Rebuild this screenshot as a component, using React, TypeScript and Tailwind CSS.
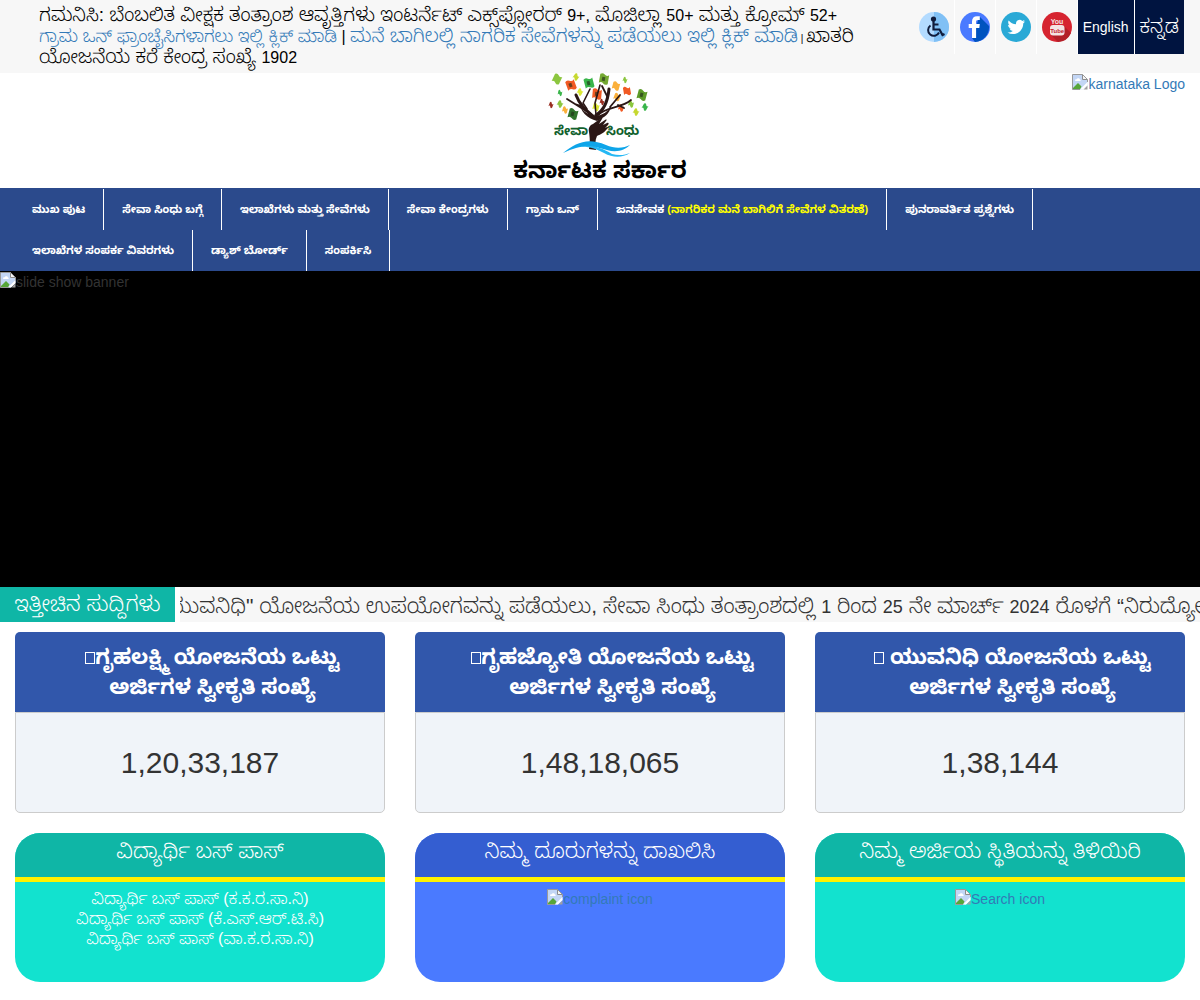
import React from "react";

function BrokenImage({ label }: { label: string }) {
  return (
    <span className="inline-flex items-start">
      <svg className="h-4 w-4 shrink-0" viewBox="0 0 16 16" aria-hidden="true">
        <path d="M.5.5h10l5 5v6L11 15.5H.5z" fill="#c3d6f5" />
        <path d="M1 15.500V14L6 9l3.500 3.500L8 15.500z" fill="#57a639" />
        <path d="M3 6.500c0-1 1-1.500 1.700-1.200.5-1.500 3-1.300 3.200.2C9 5.500 9.200 7 8 7H3.500z" fill="#fff" />
        <path d="M10.500.5v5h5" fill="#f4f4f4" stroke="#8d8d8d" />
        <path d="M11.500 15.500l4-4v4z" fill="#a0a0a0" />
        <path d="M8 15.500L15.500 8v3L11 15.500z" fill="#fff" />
        <path d="M15.500 8V5.500l-5-5H.5v15H8" fill="none" stroke="#9a9a9a" />
      </svg>
      <span>{label}</span>
    </span>
  );
}

function AccessIcon() {
  return (
    <svg className="h-[30px] w-[30px]" viewBox="0 0 30 30" aria-hidden="true">
      <circle cx="15" cy="15" r="15" fill="#b3dbff" />
      <path d="M15 0a15 15 0 010 30z" fill="#80c0f5" />
      <circle cx="14.500" cy="7" r="2.600" fill="#101c3c" />
      <path d="M14.500 9v8.500h6l3 5.500 2-1M14.500 12.500h5" fill="none" stroke="#101c3c" strokeWidth="2.200" />
      <path d="M11.500 13.500a5.700 5.700 0 108.500 7" fill="none" stroke="#101c3c" strokeWidth="2" />
    </svg>
  );
}

function FacebookIcon() {
  return (
    <svg className="h-[30px] w-[30px]" viewBox="0 0 30 30" aria-hidden="true">
      <circle cx="15" cy="15" r="15" fill="#4a7aff" />
      <path d="M19.500 4.500L29 14a15 15 0 01-14 16l-3-4z" fill="#0053bf" />
      <path d="M12 26V16H8.700v-4H12V9.500C12 6 14 4.300 17 4.300h2.800V8H18c-1.500 0-1.900.7-1.900 2v2h3.700l-.5 4h-3.200v10z" fill="#fff" />
    </svg>
  );
}

function TwitterIcon() {
  return (
    <svg className="h-[30px] w-[30px]" viewBox="0 0 30 30" aria-hidden="true">
      <circle cx="15" cy="15" r="15" fill="#2aa9d6" />
      <path
        transform="translate(6.500 6.200) scale(.73)"
        d="M23.950 4.570a10 10 0 01-2.820.77 4.950 4.950 0 002.160-2.720c-.95.550-2 .950-3.130 1.180a4.920 4.920 0 00-8.380 4.480C7.690 8.090 4.070 6.130 1.640 3.160a4.800 4.800 0 00-.67 2.480c0 1.710.870 3.210 2.190 4.100a4.900 4.900 0 01-2.230-.62v.06a4.920 4.920 0 003.950 4.830 5 5 0 01-2.210.08 4.940 4.940 0 004.600 3.420A9.870 9.870 0 010 19.540a13.990 13.990 0 007.550 2.210c9.050 0 14-7.500 14-13.980 0-.21 0-.42-.02-.63A9.940 9.940 0 0024 4.590z"
        fill="#fff"
      />
    </svg>
  );
}

function YoutubeIcon() {
  return (
    <svg className="h-[30px] w-[30px]" viewBox="0 0 30 30" aria-hidden="true">
      <circle cx="15" cy="15" r="15" fill="#d62430" />
      <path d="M22 14l7 7a15 15 0 01-13 9l-7-7z" fill="#b31f28" />
      <rect x="8" y="13" width="14.500" height="10.500" rx="3" fill="#f3e4e4" />
      <g fontFamily="Liberation Sans Narrow, Liberation Sans, sans-serif" fontWeight="700" textAnchor="middle">
        <text x="15" y="12" fontSize="7" fill="#f3e4e4">You</text>
        <text x="15.200" y="21" fontSize="6" fill="#c3222c">Tube</text>
      </g>
    </svg>
  );
}

const leaves: [number, number, number, number, string][] = [
  [57, 14, 8, 25, "#8cc63f"], [71, 20, 9, -20, "#f15a24"], [76, 12, 5, 35, "#c6d82f"],
  [89, 18, 9, -15, "#39b54a"], [104, 14, 9, 10, "#74a832"], [97, 29, 9, 5, "#f15a24"],
  [116, 21, 7, 15, "#fbb03b"], [125, 15, 4, 20, "#8cc63f"], [127, 26, 7, -10, "#f15a24"],
  [117, 32, 6, 20, "#fbb03b"], [142, 30, 9, 15, "#5d9b28"], [121, 43, 5, 15, "#f15a24"],
  [145, 42, 5, 30, "#39b54a"], [136, 47, 5, 30, "#c6d82f"], [51, 40, 4, 20, "#992d20"],
  [60, 28, 4, 10, "#39b54a"], [60, 39, 5, 30, "#8cc63f"], [65, 45, 5, 15, "#fbb03b"],
  [73, 49, 9, 15, "#31732c"], [80, 27, 5, 30, "#dce935"], [96, 42, 6, 15, "#dce935"],
  [102, 37, 4, 15, "#992d20"], [131, 39, 5, 15, "#8cc63f"],
];

function TreeLogo() {
  return (
    <svg className="h-[87px] w-[200px]" viewBox="0 0 200 87" role="img" aria-label="ಸೇವಾ ಸಿಂಧು">
      {leaves.map(([x, y, s, r, c], i) => (
        <g key={i} transform={`translate(${x} ${y - 8}) rotate(${r})`}>
          <path d={`M${-s / 2} ${-s / 2}q${s / 4}-2 ${s / 2} 0t${s / 2} 0v${s}q${-s / 4} 2 ${-s / 2} 0t${-s / 2} 0z`} fill={c} />
          {s > 8 && <rect x="-2" y="-2" width="3" height="4" fill="#223018" opacity=".65" />}
        </g>
      ))}
      <g fill="none" stroke="#2b1715" strokeLinecap="round" strokeLinejoin="round">
        <path d="M94 44C87 38 80 33 76 22" strokeWidth="3" />
        <path d="M91 41L67 26M81 33l-6-2" strokeWidth="1.800" />
        <path d="M87 36L83 30l7-14M96 42L95 30l5-18" strokeWidth="1.600" />
        <path d="M96 42c9-5 12-16 13-26" strokeWidth="3" />
        <path d="M98 42c8-8 24-7 33-15M110 34l10-12M107 23l-5-10M118 32l6 3" strokeWidth="1.800" />
      </g>
      <path d="M79 27c1 9 6 14 17 16 7-1 12-5 15-9-2 7-6 10-14 14-10-3-17-9-18-21z" fill="#2b1715" />
      <path d="M89 76c1-6 1-10 0-17-1-4 1-7 4-8l8-6c1-1 2 0 1 1l-3 5 6-4c2-1 2 0 1 1l-3 4 4-2c2-1 2 1 1 2l-3 3 2-1c2 0 1 1 0 2-3 4-6 5-10 7-2 4-2 9-1 14z" fill="#2b1715" />
      <path d="M63 80c13-10 24-16 43-8 9 4 18 3 24 0-5 5-13 8-23 5-18-6-27-5-44 3z" fill="#0ea5e9" />
      <path d="M78 74c13-3 22 0 34 7 7 2 13 1 18-1-8 5-17 5-26 0-8-4-15-7-26-6z" fill="#25b8f4" />
      <g fontFamily="Noto Sans Kannada, sans-serif" fontWeight="700" fontSize="13" fill="#11612d">
        <text x="54" y="62">ಸೇವಾ</text>
        <text x="106" y="62">ಸಿಂಧು</text>
      </g>
    </svg>
  );
}

const navItems: { text: string; note?: string }[] = [
  { text: "ಮುಖ ಪುಟ" },
  { text: "ಸೇವಾ ಸಿಂಧು ಬಗ್ಗೆ" },
  { text: "ಇಲಾಖೆಗಳು ಮತ್ತು ಸೇವೆಗಳು" },
  { text: "ಸೇವಾ ಕೇಂದ್ರಗಳು" },
  { text: "ಗ್ರಾಮ ಒನ್" },
  { text: "ಜನಸೇವಕ ", note: "(ನಾಗರಿಕರ ಮನೆ ಬಾಗಿಲಿಗೆ ಸೇವೆಗಳ ವಿತರಣೆ)" },
  { text: "ಪುನರಾವರ್ತಿತ ಪ್ರಶ್ನೆಗಳು" },
  { text: "ಇಲಾಖೆಗಳ ಸಂಪರ್ಕ ವಿವರಗಳು" },
  { text: "ಡ್ಯಾಶ್ ಬೋರ್ಡ್" },
  { text: "ಸಂಪರ್ಕಿಸಿ" },
];

const counters = [
  { title: "ಗೃಹಲಕ್ಷ್ಮಿ ಯೋಜನೆಯ ಒಟ್ಟು", value: "1,20,33,187" },
  { title: "ಗೃಹಜ್ಯೋತಿ ಯೋಜನೆಯ ಒಟ್ಟು", value: "1,48,18,065" },
  { title: " ಯುವನಿಧಿ ಯೋಜನೆಯ ಒಟ್ಟು", value: "1,38,144" },
];

function Social({ label, children }: { label: string; children: React.ReactNode }) {
  return (
    <a href="#" aria-label={label} className="flex h-[54px] items-center border-r border-white px-[5px]">
      {children}
    </a>
  );
}

function Small({ children }: { children: React.ReactNode }) {
  return <span className="text-base leading-none">{children}</span>;
}

function ServiceCard({ title, head, body, children }: { title: string; head: string; body: string; children: React.ReactNode }) {
  return (
    <section className={`flex min-h-[149px] flex-col overflow-hidden rounded-[25px] text-center ${body}`}>
      <h3 className={`h-[49px] border-b-[5px] border-[#fff200] pt-2 text-[21px] leading-5 text-white ${head}`}>{title}</h3>
      <div className="pt-[7px] text-sm leading-5 text-[#337ab7]">{children}</div>
    </section>
  );
}

export default function App() {
  return (
    <div className="bg-white font-['Liberation_Sans','Noto_Sans_Kannada',sans-serif] text-sm leading-5 font-light text-[#333]">
      <header>
        <div className="flex justify-between bg-[#f7f7f7] pr-4 pl-[39px]">
          <p className="max-w-[840px] pt-1 pb-[6px] text-[19px] leading-[21px] text-black">
            ಗಮನಿಸಿ: ಬೆಂಬಲಿತ ವೀಕ್ಷಕ ತಂತ್ರಾಂಶ ಆವೃತ್ತಿಗಳು ಇಂಟರ್ನೆಟ್ ಎಕ್ಸ್‌ಪ್ಲೋರರ್ <Small>9+,</Small> ಮೊಜಿಲ್ಲಾ <Small>50+</Small>{" "}
            ಮತ್ತು ಕ್ರೋಮ್ <Small>52+</Small>
            <br />
            <a href="#" className="text-[17px] leading-none text-[#337ab7]">ಗ್ರಾಮ ಒನ್ ಫ್ರಾಂಚೈಸಿಗಳಾಗಲು ಇಲ್ಲಿ ಕ್ಲಿಕ್ ಮಾಡಿ</a>
            <Small> | </Small>
            <a href="#" className="text-[#337ab7]">ಮನೆ ಬಾಗಿಲಲ್ಲಿ ನಾಗರಿಕ ಸೇವೆಗಳನ್ನು ಪಡೆಯಲು ಇಲ್ಲಿ ಕ್ಲಿಕ್ ಮಾಡಿ</a>
            <span className="text-[10px] leading-none"> | </span>
            ಖಾತರಿ ಯೋಜನೆಯ ಕರೆ ಕೇಂದ್ರ ಸಂಖ್ಯೆ <Small>1902</Small>
          </p>
          <nav className="flex h-[54px] shrink-0" aria-label="ಭಾಷೆ">
            <Social label="Accessibility"><AccessIcon /></Social>
            <Social label="Facebook"><FacebookIcon /></Social>
            <Social label="Twitter"><TwitterIcon /></Social>
            <Social label="YouTube"><YoutubeIcon /></Social>
            <button type="button" className="border-r border-white bg-[#001440] px-[5px] text-white">English</button>
            <button type="button" className="bg-[#001440] px-[5px] text-[19px] text-white">ಕನ್ನಡ</button>
          </nav>
        </div>
        <div className="grid h-[115px] grid-cols-[1fr_auto_1fr]">
          <div />
          <div className="flex flex-col items-center text-black">
            <TreeLogo />
            <h1 className="text-[23px] leading-5 font-bold">ಕರ್ನಾಟಕ ಸರ್ಕಾರ</h1>
          </div>
          <a href="#" className="justify-self-end pt-[1px] pr-[15px] text-[#337ab7]">
            <BrokenImage label="karnataka Logo" />
          </a>
        </div>
      </header>

      <nav className="border-t border-[#2b4a8c] bg-[#2b4a8c] px-[14px]">
        <ul className="flex flex-wrap">
          {navItems.map((n) => (
            <li key={n.text} className="border-r border-white">
              <a href="#" className="block h-[41px] px-[18px] text-[11px] leading-[41px] font-bold text-white">
                {n.text}
                {n.note && <span className="text-[#ffff00]">{n.note}</span>}
              </a>
            </li>
          ))}
        </ul>
      </nav>

      <div className="h-[316px] bg-black pt-[1px]">
        <BrokenImage label="slide show banner" />
      </div>

      <div className="flex h-[35px]">
        <h2 className="w-[175px] shrink-0 bg-[#0fb6a6] pt-[7px] text-center text-[21px] leading-5 text-white">ಇತ್ತೀಚಿನ ಸುದ್ದಿಗಳು</h2>
        <div className="ml-[5px] min-w-0 flex-1 overflow-hidden bg-[#f7f7f7]">
          <p className="-ml-4 pt-[9px] text-[21px] leading-5 whitespace-nowrap">
            ಯುವನಿಧಿ" ಯೋಜನೆಯ ಉಪಯೋಗವನ್ನು ಪಡೆಯಲು, ಸೇವಾ ಸಿಂಧು ತಂತ್ರಾಂಶದಲ್ಲಿ <span className="text-lg leading-none">1</span> ರಿಂದ{" "}
            <span className="text-lg leading-none">25</span> ನೇ ಮಾರ್ಚ್ <span className="text-lg leading-none">2024</span> ರೊಳಗೆ “ನಿರುದ್ಯೋಗ
          </p>
        </div>
      </div>

      <main className="px-[15px] pt-[10px] pb-[18px]">
        <div className="grid grid-cols-3 gap-[30px]">
          {counters.map((c) => (
            <section key={c.value} className="text-center">
              <h3 className="rounded-t-[5px] bg-[#3157ab] py-[10px] pl-[25px] text-[21px] leading-[30px] font-bold text-white">
                <span className="inline-block h-3 w-[10px] border border-white" />
                {c.title}
                <br />
                ಅರ್ಜಿಗಳ ಸ್ವೀಕೃತಿ ಸಂಖ್ಯೆ
              </h3>
              <p className="h-[101px] rounded-b-[5px] border border-[#ccc] bg-[#f0f4f9] text-[30px] leading-[100px]">{c.value}</p>
            </section>
          ))}
        </div>
        <div className="mt-5 grid grid-cols-3 gap-[30px]">
          <ServiceCard title="ವಿದ್ಯಾರ್ಥಿ ಬಸ್ ಪಾಸ್" head="bg-[#0fb6a6]" body="bg-[#12e2cf]">
            <div className="flex flex-col text-base leading-5 text-white">
              <a href="#">ವಿದ್ಯಾರ್ಥಿ ಬಸ್ ಪಾಸ್ (ಕ.ಕ.ರ.ಸಾ.ನಿ)</a>
              <a href="#">ವಿದ್ಯಾರ್ಥಿ ಬಸ್ ಪಾಸ್ (ಕೆ.ಎಸ್.ಆರ್.ಟಿ.ಸಿ)</a>
              <a href="#">ವಿದ್ಯಾರ್ಥಿ ಬಸ್ ಪಾಸ್ (ವಾ.ಕ.ರ.ಸಾ.ನಿ)</a>
            </div>
          </ServiceCard>
          <ServiceCard title="ನಿಮ್ಮ ದೂರುಗಳನ್ನು ದಾಖಲಿಸಿ" head="bg-[#345ed1]" body="bg-[#4a7aff]">
            <a href="#"><BrokenImage label="complaint icon" /></a>
          </ServiceCard>
          <ServiceCard title="ನಿಮ್ಮ ಅರ್ಜಿಯ ಸ್ಥಿತಿಯನ್ನು ತಿಳಿಯಿರಿ" head="bg-[#0fb6a6]" body="bg-[#12e2cf]">
            <a href="#"><BrokenImage label="Search icon" /></a>
          </ServiceCard>
        </div>
      </main>
    </div>
  );
}
